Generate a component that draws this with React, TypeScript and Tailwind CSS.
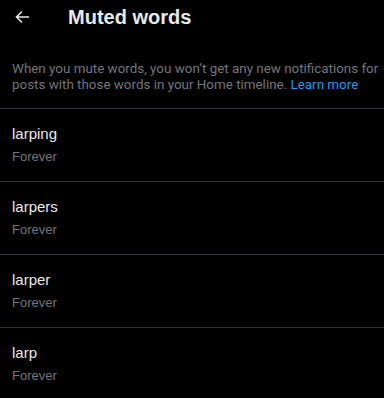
import React from "react";

const words = ["larping", "larpers", "larper", "larp"];

export default function App() {
  return (
    <div
      className="w-[384px] h-[398px] bg-black overflow-hidden text-[#e7e9ea]"
      style={{ fontFamily: '"Liberation Sans", Arial, sans-serif' }}
    >
      <div className="flex items-center h-[34px] pl-[15px]">
        <svg width="15" height="14" viewBox="0 0 15 14" fill="none" stroke="#e7e9ea" strokeWidth="1.6">
          <path d="M14 7H1.5M7 1.5L1.5 7L7 12.5" />
        </svg>
        <h1 className="ml-[38px] text-[20px] font-bold leading-[24px]">Muted words</h1>
      </div>
      <p
        className="mt-[27px] pl-3 pr-0 pb-[15px] text-[13.4px] leading-[16px] text-[#71767b] border-b border-[#2f3336] whitespace-nowrap"
        style={{ fontFamily: 'Roboto, "Liberation Sans", sans-serif' }}
      >
        When you mute words, you won’t get any new notifications for
        <br />
        posts with those words in your Home timeline.{" "}
        <span className="text-[#1d9bf0]">Learn more</span>
      </p>
      {words.map((w) => (
        <div key={w} className="h-[73px] px-3 pt-[15px] border-b border-[#2f3336]">
          <div className="text-[15px] leading-[20px] text-[#e7e9ea]">{w}</div>
          <div className="mt-[5px] text-[13px] leading-[16px] text-[#71767b]">Forever</div>
        </div>
      ))}
    </div>
  );
}
